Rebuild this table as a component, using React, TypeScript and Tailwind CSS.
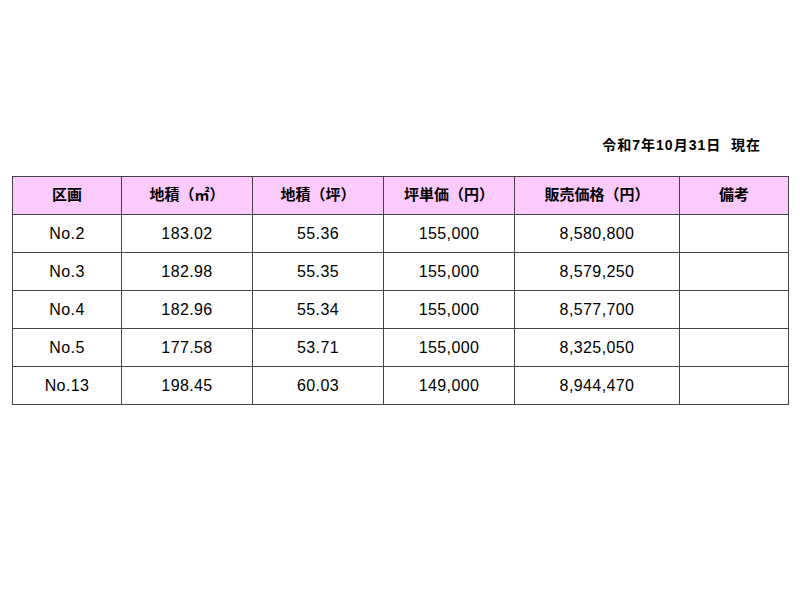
const HEAD = ['区画', '地積（㎡）', '地積（坪）', '坪単価（円）', '販売価格（円）', '備考']
const WIDTHS = ['w-[109px]', 'w-[131px]', 'w-[131px]', 'w-[131px]', 'w-[165px]', 'w-[109px]']

const ROWS = [
  ['No.2', '183.02', '55.36', '155,000', '8,580,800', ''],
  ['No.3', '182.98', '55.35', '155,000', '8,579,250', ''],
  ['No.4', '182.96', '55.34', '155,000', '8,577,700', ''],
  ['No.5', '177.58', '53.71', '155,000', '8,325,050', ''],
  ['No.13', '198.45', '60.03', '149,000', '8,944,470', ''],
]

export default function App() {
  return (
    <div className="w-[800px] h-[600px] bg-white text-black font-['Liberation_Sans','Noto_Sans_CJK_JP',sans-serif]">
      <div className="pt-[137px] pr-[39px] text-right text-[14px] tracking-[1px] font-bold leading-[16px]">
        令和7年10月31日&nbsp;&nbsp;現在
      </div>
      <table className="ml-[12px] mt-[23px] w-[776px] border-collapse table-fixed">
        <thead>
          <tr className="bg-[#fccafc] h-[38px]">
            {HEAD.map((h, i) => (
              <th
                key={h}
                className={`${WIDTHS[i]} border border-[#444] text-[15px] font-bold text-center p-0`}
              >
                {h}
              </th>
            ))}
          </tr>
        </thead>
        <tbody>
          {ROWS.map((row) => (
            <tr key={row[0]} className="h-[38px]">
              {row.map((c, i) => (
                <td key={i} className="border border-[#444] text-[16px] tracking-[0.4px] text-center p-0">
                  {c}
                </td>
              ))}
            </tr>
          ))}
        </tbody>
      </table>
    </div>
  )
}
